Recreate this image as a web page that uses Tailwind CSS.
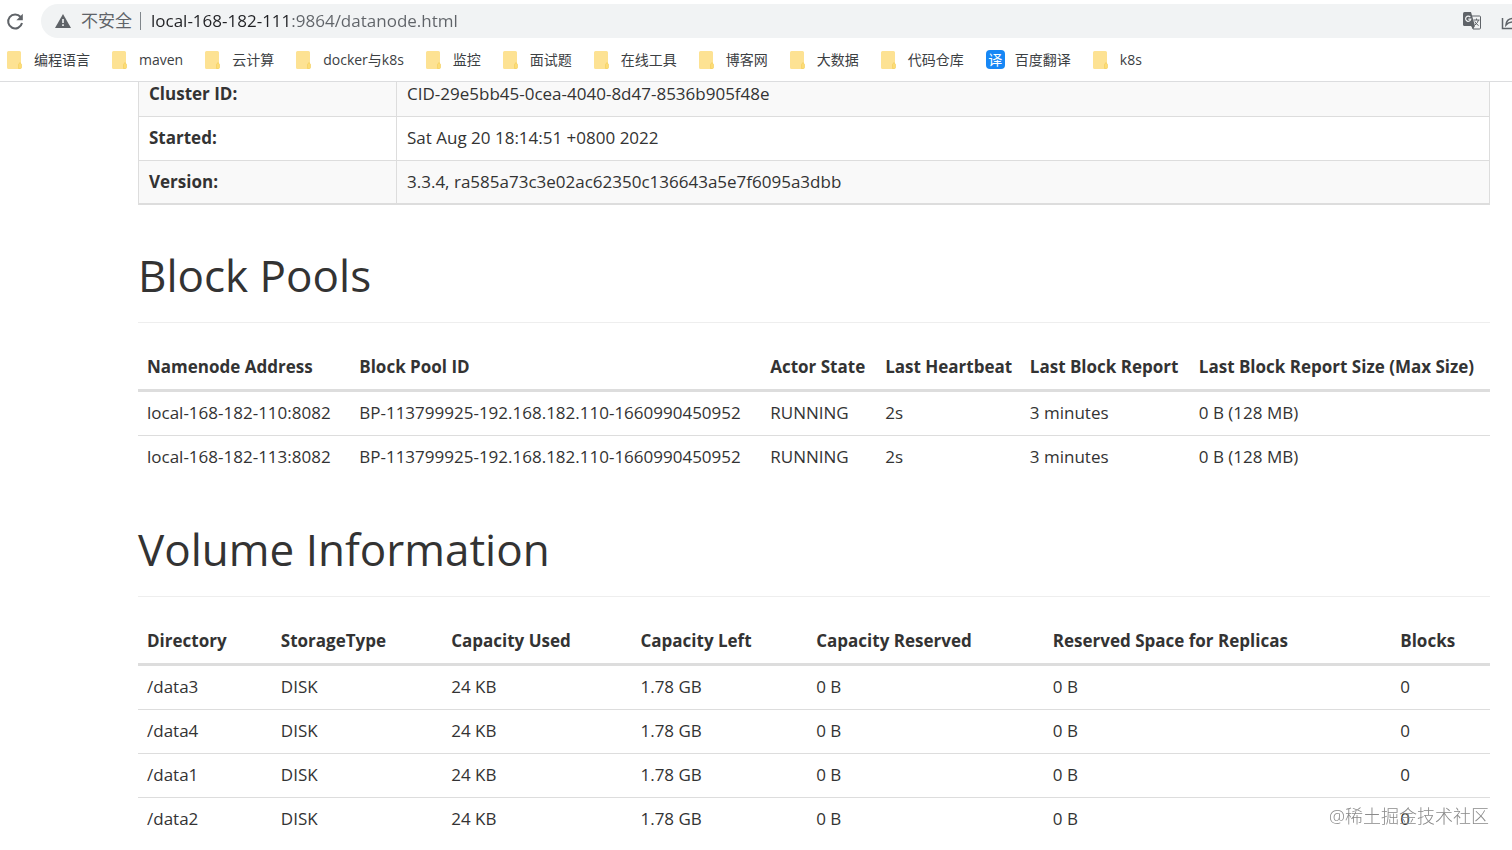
<!DOCTYPE html>
<html lang="zh-CN">
<head>
  <meta charset="UTF-8" />
  <meta name="viewport" content="width=device-width, initial-scale=1.0"/>
  <title>DataNode Information</title>
  <script src="https://cdn.jsdelivr.net/npm/@tailwindcss/browser@4"></script>
</head>
<body class="bg-white text-[#333] text-[17px] leading-6 font-['Open_Sans','Noto_Sans_CJK_SC',sans-serif]">

  <!-- Icons used more than once -->
  <svg class="hidden">
    <symbol id="folder" viewBox="0 0 15 18">
      <path d="M1.500 0h11a1.500 1.500 0 0 1 1.500 1.500v15a1.500 1.500 0 0 1-1.500 1.500h-11A1.500 1.500 0 0 1 0 16.500v-15A1.500 1.500 0 0 1 1.500 0z" fill="#fde293"/>
      <path d="M11.500 17.500v-4l1.500-2 1.500 2v3q0 1-1 1z" fill="#fddc75" stroke="#f2cc5a" stroke-width=".6"/>
    </symbol>
  </svg>

  <!-- Browser bar -->
  <header class="border-b border-[#dcdddf]">
    <div class="flex items-center pt-1 pl-1.5">
      <button type="button" aria-label="Reload" class="shrink-0 mr-4">
        <svg class="size-[19px]" viewBox="0 0 19 19" fill="none" stroke="#5f6368" stroke-width="2">
          <path d="M14.600 5A7 7 0 1 0 16 11"/>
          <path d="M16.800 1.800v6.400h-6.400z" fill="#5f6368" stroke="none"/>
        </svg>
      </button>
      <div class="flex grow items-center h-[34px] pl-3.5 rounded-l-full bg-[#f1f3f4] text-[#5f6368] overflow-hidden">
        <svg class="shrink-0 w-4 h-3.5 mr-2.5" viewBox="0 0 16 14">
          <path d="M8 0l8 14H0z" fill="#5f6368"/>
          <path d="M7.200 5h1.600v4H7.200zM7.200 10.300h1.600v1.600H7.200z" fill="#f1f3f4"/>
        </svg>
        <label for="address" class="shrink-0 pr-2 border-r border-[#80868b] leading-[18px]">不安全</label>
        <input id="address" type="text" value="local-168-182-111:9864/datanode.html" class="grow min-w-0 ml-2.5 outline-none bg-[linear-gradient(90deg,#202124_141px,#5f6368_141px)] bg-clip-text text-transparent">
        <button type="button" aria-label="Translate" class="shrink-0 mr-5">
          <svg class="w-[18px] h-[18px]" viewBox="0 0 18 18">
            <path d="M8 4h8.500q1 0 1 1v11q0 1-1 1H10z" fill="#f1f3f4" stroke="#5f6368"/>
            <path d="M1.500 0H8l4 14H1.500Q0 14 0 12.500v-11Q0 0 1.500 0z" fill="#5f6368"/>
            <path d="M8 14h4l-2 3z" fill="#5f6368"/>
            <path d="M7.300 5.200A2.600 2.600 0 1 0 7.800 7.200H5.300" fill="none" stroke="#f1f3f4" stroke-width="1.200"/>
            <path d="M10.500 8h6M13.500 6.500V8M15.500 8q-.8 3-3.500 5M11.800 9.500q1 2.500 3.800 4" fill="none" stroke="#5f6368"/>
          </svg>
        </button>
        <button type="button" aria-label="Share" class="shrink-0 w-[11px] overflow-hidden">
          <svg class="w-[19px] h-[18px] max-w-none" viewBox="0 0 19 18" fill="none" stroke="#5f6368" stroke-width="1.500">
            <path d="M1.500 6v10.500H16V13"/>
            <path d="M5 13q.5-6.500 7-6.500V3l5.500 5.500-5.500 5V10q-4.500 0-7 3z"/>
          </svg>
        </button>
      </div>
    </div>

    <!-- Bookmarks -->
    <nav class="flex items-center gap-[22px] h-[43px] pl-[7px] text-sm text-[#3c4043] whitespace-nowrap">
      <a href="#" class="flex items-center gap-3"><svg class="w-[15px] h-[18px]"><use href="#folder"/></svg>编程语言</a>
      <a href="#" class="flex items-center gap-3"><svg class="w-[15px] h-[18px]"><use href="#folder"/></svg>maven</a>
      <a href="#" class="flex items-center gap-3"><svg class="w-[15px] h-[18px]"><use href="#folder"/></svg>云计算</a>
      <a href="#" class="flex items-center gap-3"><svg class="w-[15px] h-[18px]"><use href="#folder"/></svg>docker与k8s</a>
      <a href="#" class="flex items-center gap-3"><svg class="w-[15px] h-[18px]"><use href="#folder"/></svg>监控</a>
      <a href="#" class="flex items-center gap-3"><svg class="w-[15px] h-[18px]"><use href="#folder"/></svg>面试题</a>
      <a href="#" class="flex items-center gap-3"><svg class="w-[15px] h-[18px]"><use href="#folder"/></svg>在线工具</a>
      <a href="#" class="flex items-center gap-3"><svg class="w-[15px] h-[18px]"><use href="#folder"/></svg>博客网</a>
      <a href="#" class="flex items-center gap-3"><svg class="w-[15px] h-[18px]"><use href="#folder"/></svg>大数据</a>
      <a href="#" class="flex items-center gap-3"><svg class="w-[15px] h-[18px]"><use href="#folder"/></svg>代码仓库</a>
      <a href="#" class="flex items-center gap-2.5"><span class="flex items-center justify-center size-[19px] rounded bg-[#1787f5] text-white">译</span>百度翻译</a>
      <a href="#" class="flex items-center gap-3"><svg class="w-[15px] h-[18px]"><use href="#folder"/></svg>k8s</a>
    </nav>
  </header>

  <main class="ml-[138px] mr-[22px]">
    <!-- Summary -->
    <table class="w-full table-fixed border-separate border-spacing-0 text-left border-l border-b border-[#ddd]">
      <colgroup><col class="w-[19.1%]"><col></colgroup>
      <tbody>
        <tr class="bg-[#f9f9f9]">
          <th class="px-2.5 pb-2.5 border-r border-b border-[#ddd] font-bold">Cluster ID:</th>
          <td class="px-2.5 pb-2.5 border-r border-b border-[#ddd]">CID-29e5bb45-0cea-4040-8d47-8536b905f48e</td>
        </tr>
        <tr>
          <th class="px-2.5 pt-[9px] pb-2.5 border-r border-b border-[#ddd] font-bold">Started:</th>
          <td class="px-2.5 pt-[9px] pb-2.5 border-r border-b border-[#ddd]">Sat Aug 20 18:14:51 +0800 2022</td>
        </tr>
        <tr class="bg-[#f9f9f9]">
          <th class="px-2.5 pt-[9px] pb-[9px] border-r border-b border-[#ddd] font-bold">Version:</th>
          <td class="px-2.5 pt-[9px] pb-[9px] border-r border-b border-[#ddd]">3.3.4, ra585a73c3e02ac62350c136643a5e7f6095a3dbb</td>
        </tr>
      </tbody>
    </table>

    <!-- Block pools -->
    <h1 class="mt-[45px] pb-[22px] border-b border-[#eee] text-[44px] leading-[50px]">Block Pools</h1>
    <table class="w-full mt-[22px] table-fixed text-left whitespace-nowrap">
      <colgroup>
        <col class="w-[15.7%]"><col class="w-[30.4%]"><col class="w-[8.5%]"><col class="w-[10.7%]"><col class="w-[12.5%]"><col>
      </colgroup>
      <thead>
        <tr class="border-b-3 border-[#ddd]">
          <th class="px-[9px] py-2.5 font-bold">Namenode Address</th>
          <th class="px-[9px] py-2.5 font-bold">Block Pool ID</th>
          <th class="px-[9px] py-2.5 font-bold">Actor State</th>
          <th class="px-[9px] py-2.5 font-bold">Last Heartbeat</th>
          <th class="px-[9px] py-2.5 font-bold">Last Block Report</th>
          <th class="px-[9px] py-2.5 font-bold">Last Block Report Size (Max Size)</th>
        </tr>
      </thead>
      <tbody>
        <tr class="border-b border-[#ddd]">
          <td class="px-[9px] pt-[9px] pb-2.5">local-168-182-110:8082</td>
          <td class="px-[9px] pt-[9px] pb-2.5">BP-113799925-192.168.182.110-1660990450952</td>
          <td class="px-[9px] pt-[9px] pb-2.5">RUNNING</td>
          <td class="px-[9px] pt-[9px] pb-2.5">2s</td>
          <td class="px-[9px] pt-[9px] pb-2.5">3 minutes</td>
          <td class="px-[9px] pt-[9px] pb-2.5">0 B (128 MB)</td>
        </tr>
        <tr>
          <td class="px-[9px] pt-[9px] pb-2.5">local-168-182-113:8082</td>
          <td class="px-[9px] pt-[9px] pb-2.5">BP-113799925-192.168.182.110-1660990450952</td>
          <td class="px-[9px] pt-[9px] pb-2.5">RUNNING</td>
          <td class="px-[9px] pt-[9px] pb-2.5">2s</td>
          <td class="px-[9px] pt-[9px] pb-2.5">3 minutes</td>
          <td class="px-[9px] pt-[9px] pb-2.5">0 B (128 MB)</td>
        </tr>
      </tbody>
    </table>

    <!-- Volumes -->
    <h1 class="mt-[45px] pb-[22px] border-b border-[#eee] text-[44px] leading-[50px]">Volume Information</h1>
    <table class="w-full mt-[22px] table-fixed text-left whitespace-nowrap">
      <colgroup>
        <col class="w-[9.9%]"><col class="w-[12.6%]"><col class="w-[14%]"><col class="w-[13%]"><col class="w-[17.5%]"><col class="w-[25.7%]"><col>
      </colgroup>
      <thead>
        <tr class="border-b-3 border-[#ddd]">
          <th class="px-[9px] py-2.5 font-bold">Directory</th>
          <th class="px-[9px] py-2.5 font-bold">StorageType</th>
          <th class="px-[9px] py-2.5 font-bold">Capacity Used</th>
          <th class="px-[9px] py-2.5 font-bold">Capacity Left</th>
          <th class="px-[9px] py-2.5 font-bold">Capacity Reserved</th>
          <th class="px-[9px] py-2.5 font-bold">Reserved Space for Replicas</th>
          <th class="px-[9px] py-2.5 font-bold">Blocks</th>
        </tr>
      </thead>
      <tbody>
        <tr class="border-b border-[#ddd]">
          <td class="px-[9px] pt-[9px] pb-2.5">/data3</td>
          <td class="px-[9px] pt-[9px] pb-2.5">DISK</td>
          <td class="px-[9px] pt-[9px] pb-2.5">24 KB</td>
          <td class="px-[9px] pt-[9px] pb-2.5">1.78 GB</td>
          <td class="px-[9px] pt-[9px] pb-2.5">0 B</td>
          <td class="px-[9px] pt-[9px] pb-2.5">0 B</td>
          <td class="px-[9px] pt-[9px] pb-2.5">0</td>
        </tr>
        <tr class="border-b border-[#ddd]">
          <td class="px-[9px] pt-[9px] pb-2.5">/data4</td>
          <td class="px-[9px] pt-[9px] pb-2.5">DISK</td>
          <td class="px-[9px] pt-[9px] pb-2.5">24 KB</td>
          <td class="px-[9px] pt-[9px] pb-2.5">1.78 GB</td>
          <td class="px-[9px] pt-[9px] pb-2.5">0 B</td>
          <td class="px-[9px] pt-[9px] pb-2.5">0 B</td>
          <td class="px-[9px] pt-[9px] pb-2.5">0</td>
        </tr>
        <tr class="border-b border-[#ddd]">
          <td class="px-[9px] pt-[9px] pb-2.5">/data1</td>
          <td class="px-[9px] pt-[9px] pb-2.5">DISK</td>
          <td class="px-[9px] pt-[9px] pb-2.5">24 KB</td>
          <td class="px-[9px] pt-[9px] pb-2.5">1.78 GB</td>
          <td class="px-[9px] pt-[9px] pb-2.5">0 B</td>
          <td class="px-[9px] pt-[9px] pb-2.5">0 B</td>
          <td class="px-[9px] pt-[9px] pb-2.5">0</td>
        </tr>
        <tr>
          <td class="px-[9px] pt-[9px] pb-2.5">/data2</td>
          <td class="px-[9px] pt-[9px] pb-2.5">DISK</td>
          <td class="px-[9px] pt-[9px] pb-2.5">24 KB</td>
          <td class="px-[9px] pt-[9px] pb-2.5">1.78 GB</td>
          <td class="px-[9px] pt-[9px] pb-2.5">0 B</td>
          <td class="px-[9px] pt-[9px] pb-2.5">0 B</td>
          <td class="px-[9px] pt-[9px] pb-2.5">0</td>
        </tr>
      </tbody>
    </table>
  </main>

  <!-- Watermark -->
  <p class="fixed right-[23px] bottom-[22px] text-lg leading-6 font-light text-[#8a8a8a]">@稀土掘金技术社区</p>
</body>
</html>
